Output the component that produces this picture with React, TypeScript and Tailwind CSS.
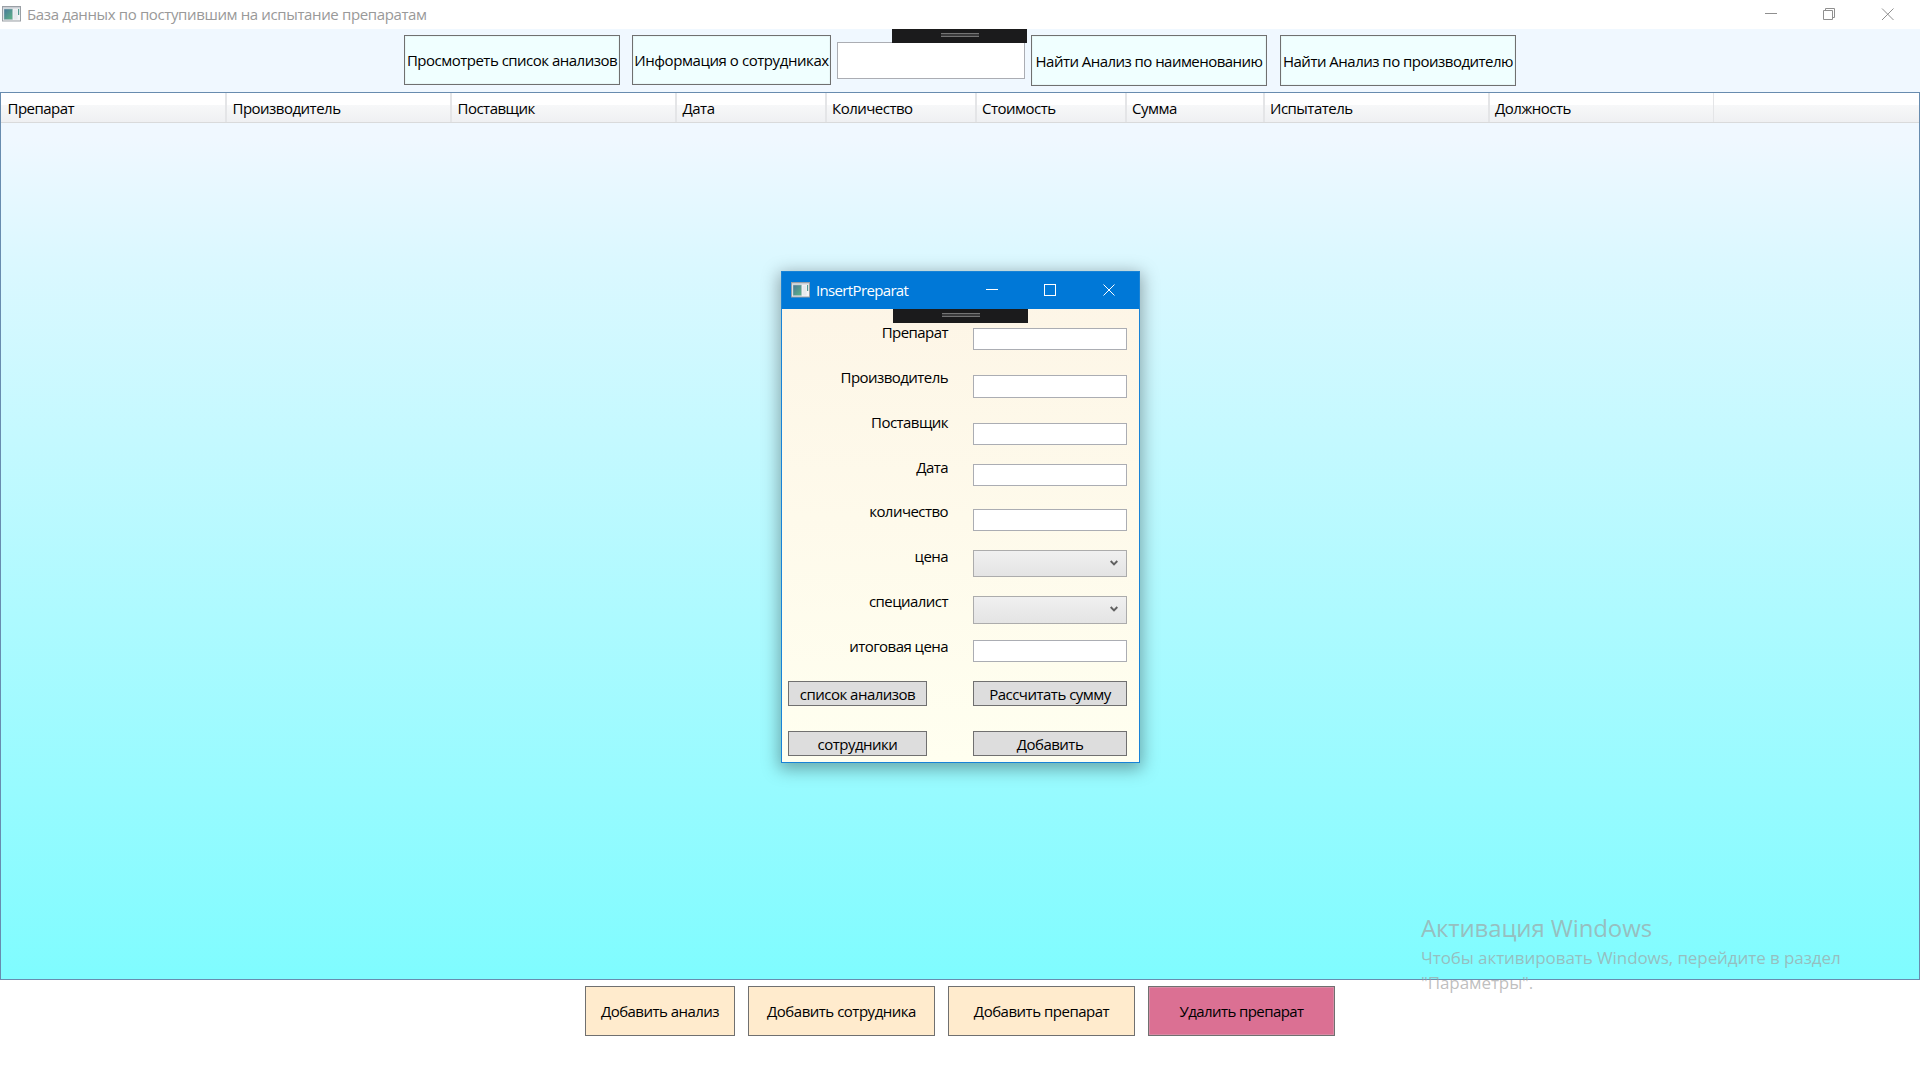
import React from 'react';

const columns = [
  { title: 'Препарат', width: 'w-[226px]', pad: 'pl-[6.5px]' },
  { title: 'Производитель', width: 'w-[225px]', pad: 'pl-[5.5px]' },
  { title: 'Поставщик', width: 'w-[225px]', pad: 'pl-[5.5px]' },
  { title: 'Дата', width: 'w-[150px]', pad: 'pl-[5.5px]' },
  { title: 'Количество', width: 'w-[150px]', pad: 'pl-[5px]' },
  { title: 'Стоимость', width: 'w-[150px]', pad: 'pl-[5px]' },
  { title: 'Сумма', width: 'w-[138px]', pad: 'pl-[5px]' },
  { title: 'Испытатель', width: 'w-[225px]', pad: 'pl-[5px]' },
  { title: 'Должность', width: 'w-[224px]', pad: 'pl-[5px]' },
];

const labels = [
  'Препарат',
  'Производитель',
  'Поставщик',
  'Дата',
  'количество',
  'цена',
  'специалист',
  'итоговая цена',
];

function AppIcon({ className = '' }: { className?: string }) {
  return (
    <svg className={className} width="19" height="16" viewBox="0 0 19 16">
      <defs>
        <linearGradient id="screen" x1="0" y1="0" x2="1" y2="1">
          <stop offset="0" stopColor="#47789b" />
          <stop offset="1" stopColor="#5fb585" />
        </linearGradient>
      </defs>
      <rect x="0.5" y="0.5" width="18" height="14.5" fill="#f4f5f6" stroke="#9a9fa5" />
      <rect x="1" y="1" width="17" height="1.5" fill="#c9ced4" />
      <rect x="2" y="3" width="8.5" height="10.5" fill="url(#screen)" stroke="#a9bcc2" strokeWidth="0.6" />
      <rect x="11.5" y="3.5" width="4" height="10" fill="#e6eaed" />
      <rect x="16" y="3" width="1.2" height="6" fill="#559a92" />
    </svg>
  );
}

function DebugTab({ className = '' }: { className?: string }) {
  return (
    <div className={`absolute h-[14px] w-[135px] bg-[#1b1b1c] ${className}`}>
      <div className="mt-1 ml-[49px] h-1 w-[38px] border-y border-[#747474] bg-[#3a3a3b]" />
    </div>
  );
}

function ToolButton({ className, children }: { className: string; children: React.ReactNode }) {
  return (
    <button
      className={`shrink-0 border border-[#707070] bg-[#f0ffff] text-center whitespace-nowrap shadow-[inset_0_0_0_1px_#e8f7f7] ${className}`}
    >
      {children}
    </button>
  );
}

function FooterButton({ className, children }: { className: string; children: React.ReactNode }) {
  return (
    <button className={`h-[50px] shrink-0 border border-[#707070] pt-px whitespace-nowrap ${className}`}>
      {children}
    </button>
  );
}

function TextField({ className }: { className: string }) {
  return <input className={`block w-[154px] shrink-0 border border-[#abadb3] bg-white ${className}`} />;
}

function Combo({ className }: { className: string }) {
  return (
    <div
      className={`flex w-[154px] shrink-0 justify-end border border-[#acacac] bg-linear-to-b from-[#f0f0f0] to-[#e4e4e4] pr-2 ${className}`}
    >
      <svg className="mt-[9px]" width="8" height="7" viewBox="0 0 8 7" fill="none" stroke="#606060" strokeWidth="1.9">
        <path d="M0.7 1 L4 4.4 L7.3 1" />
      </svg>
    </div>
  );
}

function DialogButton({ className, children }: { className: string; children: React.ReactNode }) {
  return (
    <button
      className={`h-[25px] shrink-0 border border-[#707070] bg-[#dddddd] leading-[23px] whitespace-nowrap ${className}`}
    >
      <span className="block pt-px leading-[22px]">{children}</span>
    </button>
  );
}

function InsertDialog() {
  return (
    <div className="absolute top-[271px] left-[781px] flex h-[492px] w-[359px] flex-col border border-[#1883d7] bg-linear-to-b from-[#fdf5e6] to-[#fffff0] shadow-[0_4px_16px_2px_rgba(0,0,0,0.34)]">
      <div className="flex h-[37px] shrink-0 bg-[#0078d7] text-white">
        <AppIcon className="mt-[10px] ml-[9px]" />
        <span className="ml-[6px] w-[173px] leading-[36px] tracking-[-0.65px]">InsertPreparat</span>
        <svg className="mt-[11px] -ml-[3px]" width="130" height="14" viewBox="0 0 130 14" fill="none" stroke="#fff">
          <path d="M0 6.5 H12" />
          <rect x="58.5" y="1.5" width="11" height="11" />
          <path d="M117.5 1.5 L128.5 12.5 M128.5 1.5 L117.5 12.5" />
        </svg>
      </div>
      <div className="flex">
        <div className="flex w-[166px] flex-col">
          <div className="flex h-[360px] flex-col pt-[0.98px] text-right tracking-[-0.55px]">
            {labels.map((label) => (
              <span key={label} className="h-[44.85px] leading-[45px]">
                {label}
              </span>
            ))}
          </div>
          <DialogButton className="mt-3 ml-[6px] w-[139px]">список анализов</DialogButton>
          <DialogButton className="mt-[25px] ml-[6px] w-[139px]">сотрудники</DialogButton>
        </div>
        <div className="ml-[25px] flex flex-col">
          <TextField className="mt-[19px] h-[22px]" />
          <TextField className="mt-[25px] h-[23px]" />
          <TextField className="mt-[25px] h-[22px]" />
          <TextField className="mt-[19px] h-[22px]" />
          <TextField className="mt-[23px] h-[22px]" />
          <Combo className="mt-[19px] h-[27px]" />
          <Combo className="mt-[19px] h-[28px]" />
          <TextField className="mt-[16px] h-[22px]" />
          <DialogButton className="mt-[19px] w-[154px]">Рассчитать сумму</DialogButton>
          <DialogButton className="mt-[25px] w-[154px]">Добавить</DialogButton>
        </div>
      </div>
      <DebugTab className="top-[37px] left-[111px]" />
    </div>
  );
}

export default function App() {
  return (
    <div className="relative flex h-[1080px] w-[1920px] flex-col overflow-hidden bg-white font-['Open_Sans','Noto_Sans',sans-serif] text-[15px] tracking-[-0.51px] text-black">
      <header className="flex h-[29px] shrink-0 justify-between text-[#999999]">
        <div className="flex">
          <AppIcon className="mt-[6px] ml-[2px]" />
          <span className="ml-[6px] leading-[29px] tracking-[-0.37px]">
            База данных по поступившим на испытание препаратам
          </span>
        </div>
        <svg className="mt-[7px] mr-6" width="131" height="14" viewBox="0 0 131 14" fill="none" stroke="#8f8f8f">
          <path d="M0 6.5 H12" />
          <path d="M58.5 3.5 h9 v9 h-9 z M60.5 3.5 v-2 h9 v9 h-2" />
          <path d="M117 1.5 L128.5 13 M128.5 1.5 L117 13" />
        </svg>
      </header>

      <div className="flex h-[63px] shrink-0 items-start bg-[#f0f8ff] pt-[6px] pl-[404px]">
        <ToolButton className="h-[50px] w-[216px]">Просмотреть список анализов</ToolButton>
        <ToolButton className="ml-3 h-[50px] w-[199px] tracking-[-0.43px]">Информация о сотрудниках</ToolButton>
        <input className="mt-[7px] ml-[6px] h-[37px] w-[188px] border border-[#abadb3] bg-white" />
        <ToolButton className="ml-[6px] h-[51px] w-[236px] pt-px tracking-[-0.54px]">Найти Анализ по наименованию</ToolButton>
        <ToolButton className="ml-[13px] h-[51px] w-[236px] pt-px">Найти Анализ по производителю</ToolButton>
      </div>
      <DebugTab className="top-[29px] left-[892px]" />

      <main className="h-[888px] shrink-0 border border-[#688caf] bg-[linear-gradient(#f0f8ff_0%,#f0f8ff_5%,#dbf8ff_19%,#7ffcff_100%)]">
        <div className="flex h-[30px] border-b border-[#d9dadb] bg-[linear-gradient(#ffffff_0,#ffffff_40%,#f7f8f9_40%,#eff0f2_100%)]">
          {columns.map((column) => (
            <div
              key={column.title}
              className={`${column.width} ${column.pad} shrink-0 border-r-2 border-[#e4e5e7] pt-[1px] leading-[29px] last:border-r`}
            >
              {column.title}
            </div>
          ))}
        </div>
      </main>

      <footer className="flex grow items-start bg-white pt-[6px] pl-[585px] tracking-[-0.49px]">
        <FooterButton className="w-[150px] bg-[#ffebcd] tracking-[-0.53px]">Добавить анализ</FooterButton>
        <FooterButton className="ml-[13px] w-[187px] bg-[#ffebcd]">Добавить сотрудника</FooterButton>
        <FooterButton className="ml-[13px] w-[187px] bg-[#ffebcd]">Добавить препарат</FooterButton>
        <FooterButton className="ml-[13px] w-[187px] bg-[#db7093] tracking-[-0.58px] shadow-[inset_0_0_0_1px_#d98ba5]">
          Удалить препарат
        </FooterButton>
      </footer>

      <div className="absolute top-[911px] left-[1421px] text-[17px] leading-[25px] tracking-[-0.08px] text-[rgba(160,160,160,0.68)]">
        <p className="text-2xl leading-[34px] tracking-[-0.13px]">Активация Windows</p>
        <p>Чтобы активировать Windows, перейдите в раздел</p>
        <p>"Параметры".</p>
      </div>

      <InsertDialog />
    </div>
  );
}
